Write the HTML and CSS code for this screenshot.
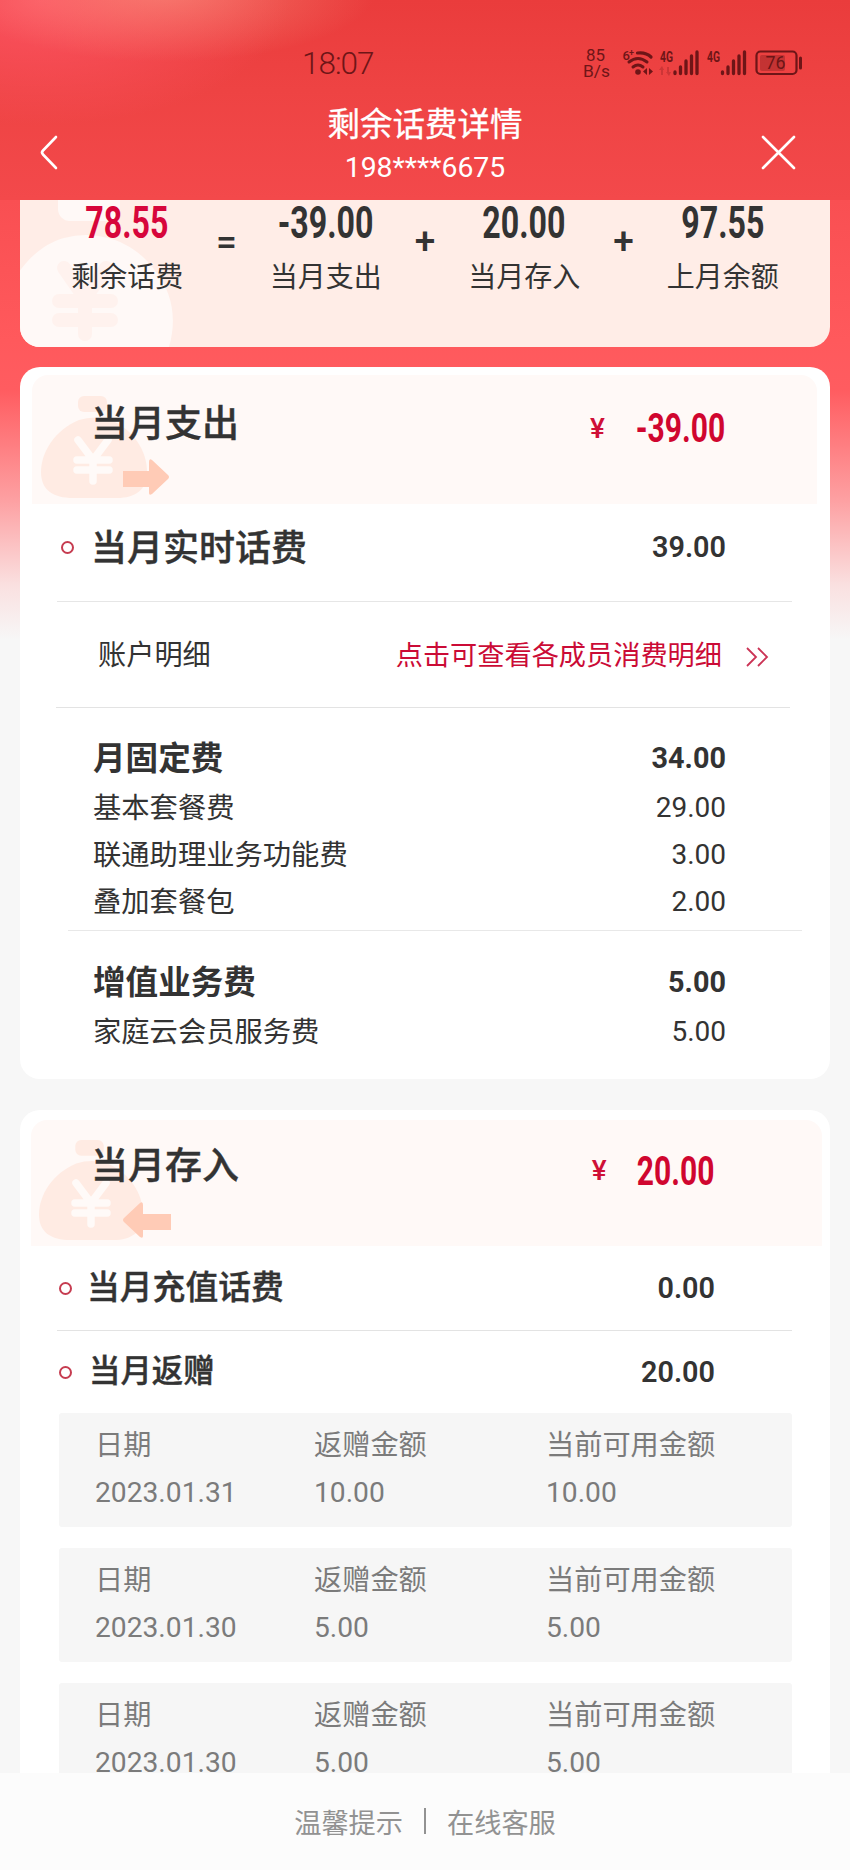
FILE: index.html
```html
<!DOCTYPE html>
<html lang="zh-CN">
<head>
<meta charset="utf-8">
<title>剩余话费详情</title>
<link rel="stylesheet" href="styles.css">
</head>
<body>
<svg class="defs" width="0" height="0">
  <symbol id="bag" viewBox="0 0 106 102">
    <rect x="37" y="0" width="29" height="16" rx="6"/>
    <path d="M38 24C14 34 0 56 0 76C0 94 12 102 32 102H76C94 102 106 94 106 76C106 54 92 34 70 24Q54 19 38 24Z"/>
  </symbol>
  <symbol id="yen" viewBox="0 0 40 50">
    <path d="M5 4L20 24L35 4M20 22V45M4 24H36M4 34H36" fill="none" stroke-linecap="round"/>
  </symbol>
</svg>
<div class="page">
  <header class="header">
    <div class="status">
      <span class="clock">18:07</span>
      <svg class="indicators" width="270" height="60" viewBox="0 0 270 60">
        <g class="status-text">
          <text x="26" y="31" font-size="17" textLength="19" lengthAdjust="spacingAndGlyphs">85</text>
          <text x="23" y="47" font-size="17" textLength="27" lengthAdjust="spacingAndGlyphs">B/s</text>
          <text x="62.500" y="30" font-size="13" font-weight="500">6<tspan dx="-1" dy="-4" font-size="9">+</tspan></text>
          <text x="100" y="31.500" font-size="15" font-weight="700" textLength="13" lengthAdjust="spacingAndGlyphs">4G</text>
          <text x="147" y="31.500" font-size="15" font-weight="700" textLength="13" lengthAdjust="spacingAndGlyphs">4G</text>
          <text x="205.500" y="39" font-size="18" textLength="20" lengthAdjust="spacingAndGlyphs">76</text>
        </g>
        <g class="status-line">
          <path d="M77.500 23Q86 22 91 27" stroke-width="3.200"/>
          <path d="M69 32Q78 25 87 32" stroke-width="3"/>
          <path d="M73 37Q78 33 83 37" stroke-width="3"/>
          <path d="M115 43.500V42M120.500 43.500V37M126 43.500V31M131.500 43.500V26M137 43.500V22" stroke-width="3.300"/>
          <path d="M162.500 43.500V42M168 43.500V37M173.500 43.500V31M179 43.500V26M184.500 43.500V22" stroke-width="3.300"/>
          <rect x="196.500" y="21.500" width="40" height="22.500" rx="4" stroke-width="2.200"/>
          <path d="M240.500 28V38" stroke-width="3"/>
        </g>
        <g class="status-fill">
          <circle cx="78" cy="42" r="2.800"/>
          <path d="M83 41.500L87 38V45ZM93 41.500L89 38V45Z"/>
          <rect x="200" y="25" width="25" height="16" rx="2" opacity=".32"/>
          <path d="M99 40L102 36L104 40H103V45H101V40ZM106 42L109 46L111 42H109V37H107V42Z" opacity=".25"/>
        </g>
      </svg>
    </div>
    <div class="titlebar">
      <svg class="nav-icon" width="36" height="36" viewBox="0 0 36 36"><path d="M19 2L6 15.500Q4 17.500 6 19.500L19 33"/></svg>
      <div class="titles">
        <h1 class="title">剩余话费详情</h1>
        <p class="phone">198****6675</p>
      </div>
      <svg class="nav-icon" width="36" height="36" viewBox="0 0 36 36"><path d="M3 2L34 33M34 2L3 33"/></svg>
    </div>
  </header>

  <main class="content">
    <section class="summary">
      <svg class="summary-bag" width="160" height="150" viewBox="0 0 160 150">
        <rect x="38" y="-14" width="62" height="35" rx="12"/>
        <path d="M44 38C22 44 4 62 -6 80V150H148C158 120 152 92 136 72C122 52 104 42 88 38Q66 32 44 38Z"/>
        <path class="summary-yen" d="M44 68L65 98L86 68M65 98V134M39 101H91M39 120H91"/>
      </svg>
      <div class="sum-item"><b class="sum-num sum-red">78.55</b><span class="sum-label">剩余话费</span></div>
      <span class="op">=</span>
      <div class="sum-item"><b class="sum-num">-39.00</b><span class="sum-label">当月支出</span></div>
      <span class="op">+</span>
      <div class="sum-item"><b class="sum-num">20.00</b><span class="sum-label">当月存入</span></div>
      <span class="op">+</span>
      <div class="sum-item"><b class="sum-num">97.55</b><span class="sum-label">上月余额</span></div>
    </section>

    <section class="card card-out">
      <div class="banner">
        <svg class="banner-art" width="140" height="108" viewBox="0 0 140 108">
          <use href="#bag" x="0" y="0" width="106" height="102"/>
          <use class="yen" href="#yen" x="32" y="40" width="40" height="50"/>
          <path class="arrow" d="M82 75H108V66Q108 62 111 64L127 79Q129 81 127 83L111 98Q108 100 108 97V91H82Z"/>
        </svg>
        <h2 class="banner-title">当月支出</h2>
        <span class="yuan">¥</span>
        <b class="banner-num">-39.00</b>
      </div>
      <div class="row row-live"><i class="dot"></i><h3 class="name name-xl">当月实时话费</h3><b class="num">39.00</b></div>
      <div class="row row-account">
        <span class="account">账户明细</span>
        <a class="link">点击可查看各成员消费明细</a>
        <svg class="chevrons" width="24" height="22" viewBox="0 0 24 22"><path d="M2 2L11 11L2 20M13 2L22 11L13 20"/></svg>
      </div>
      <div class="group group-fixed">
        <div class="row row-head"><h3 class="name name-bold">月固定费</h3><b class="num num-bold">34.00</b></div>
        <div class="row row-line"><span class="name">基本套餐费</span><span class="num">29.00</span></div>
        <div class="row row-line"><span class="name">联通助理业务功能费</span><span class="num">3.00</span></div>
        <div class="row row-line"><span class="name">叠加套餐包</span><span class="num">2.00</span></div>
      </div>
      <div class="group group-extra">
        <div class="row row-head"><h3 class="name name-bold">增值业务费</h3><b class="num num-bold">5.00</b></div>
        <div class="row row-line"><span class="name">家庭云会员服务费</span><span class="num">5.00</span></div>
      </div>
    </section>

    <section class="card card-in">
      <div class="banner">
        <svg class="banner-art" width="140" height="108" viewBox="0 0 140 108">
          <use href="#bag" x="0" y="0" width="104" height="102"/>
          <use class="yen" href="#yen" x="32" y="40" width="40" height="50"/>
          <path class="arrow" d="M132 75H104V66Q104 62 101 64L85 79Q83 81 85 83L101 98Q104 100 104 97V91H132Z"/>
        </svg>
        <h2 class="banner-title">当月存入</h2>
        <span class="yuan">¥</span>
        <b class="banner-num">20.00</b>
      </div>
      <div class="row row-recharge"><i class="dot"></i><h3 class="name name-lg">当月充值话费</h3><b class="num">0.00</b></div>
      <div class="row row-gift"><i class="dot"></i><h3 class="name name-md">当月返赠</h3><b class="num">20.00</b></div>
      <div class="gifts">
        <dl class="gift">
          <div><dt>日期</dt><dd>2023.01.31</dd></div>
          <div><dt>返赠金额</dt><dd>10.00</dd></div>
          <div><dt>当前可用金额</dt><dd>10.00</dd></div>
        </dl>
        <dl class="gift">
          <div><dt>日期</dt><dd>2023.01.30</dd></div>
          <div><dt>返赠金额</dt><dd>5.00</dd></div>
          <div><dt>当前可用金额</dt><dd>5.00</dd></div>
        </dl>
        <dl class="gift">
          <div><dt>日期</dt><dd>2023.01.30</dd></div>
          <div><dt>返赠金额</dt><dd>5.00</dd></div>
          <div><dt>当前可用金额</dt><dd>5.00</dd></div>
        </dl>
      </div>
    </section>
  </main>

  <footer class="footer"><span>温馨提示</span><i class="bar"></i><span>在线客服</span></footer>
</div>
</body>
</html>
```
FILE: styles.css
```css
* { box-sizing: border-box; margin: 0; padding: 0; }
body {
  width: 850px;
  background: #f7f7f7;
  color: #333;
  font-family: Roboto, "Noto Sans CJK SC", sans-serif;
}
i { font-style: normal; }
.defs { display: block; }
.page {
  width: 850px;
  height: 1870px;
  overflow: hidden;
  display: flex;
  flex-direction: column;
  background: linear-gradient(#f34a4d 0, #f94f52 200px, #ff595c 340px, #ff5c60 390px, #fda0a2 500px, #fae0e0 585px, #f7f7f7 640px);
}

/* header */
.header {
  flex: none;
  height: 200px;
  background:
    radial-gradient(ellipse 210px 70px at 165px -8px, rgba(250, 150, 130, .6), rgba(250, 140, 125, 0)),
    radial-gradient(ellipse 250px 125px at 40px 0, rgba(255, 88, 104, .85), rgba(255, 80, 98, 0)),
    linear-gradient(#ea3c3c, #ee4343 90px, #f3494b 200px);
}
.status { height: 90px; display: flex; padding-top: 30px; }
.clock {
  width: 258px;
  margin-left: 302px;
  font-size: 31.500px;
  line-height: 67px;
  font-weight: 300;
  color: #6e1517;
  letter-spacing: -1px;
}
.indicators { color: #6e1517; }
.status-text, .status-fill { fill: #6e1517; }
.status-line { fill: none; stroke: #6e1517; stroke-linecap: round; }
.titlebar { display: flex; justify-content: space-between; padding: 15px 54px 0 37px; }
.nav-icon { margin-top: 30px; fill: none; stroke: #fff; stroke-width: 2.600; stroke-linecap: round; }
.titles { width: 300px; margin-left: 17px; text-align: center; color: #fff; }
.title { font-size: 32.500px; line-height: 40px; font-weight: 400; -webkit-text-stroke: .3px #fff; }
.phone { font-size: 28.400px; line-height: 46px; }

.content { flex: none; height: 1573px; overflow: hidden; padding: 0 20px; }

/* balance equation */
.summary {
  position: relative;
  height: 147px;
  overflow: hidden;
  display: flex;
  justify-content: center;
  background: #ffede7;
  border-radius: 0 0 20px 20px;
}
.summary-bag { position: absolute; left: 0; top: 0; fill: #fff9f7; }
.summary-yen { fill: none; stroke: #fff2ee; stroke-width: 14; stroke-linecap: round; }
.sum-item { position: relative; width: 138px; flex: none; display: flex; flex-direction: column; align-items: center; }
.sum-num { font-size: 44px; line-height: 44px; padding-top: 1px; transform: scaleX(.73); white-space: nowrap; }
.sum-red { color: #d7063b; }
.sum-label { font-size: 28px; line-height: 40px; margin-top: 12.500px; white-space: nowrap; }
.op { width: 60.500px; flex: none; text-align: center; font-size: 37px; font-weight: 500; line-height: 83px; }

/* cards */
.card { background: #fff; border-radius: 20px; }
.card-out { margin-top: 20px; height: 712px; padding-top: 8px; }
.card-in { margin-top: 31px; height: 740px; padding-top: 10px; }
.banner { position: relative; display: flex; align-items: center; border-radius: 16px 16px 0 0; background: #fff9f7; }
.banner > :not(.banner-art) { position: relative; }
.card-out .banner { height: 129px; margin: 0 13px 0 12px; padding: 0 92px 30px 59px; }
.card-in .banner { height: 126px; margin: 0 8px 0 11px; padding: 0 108px 32px 60px; }
.banner-art { position: absolute; left: 9px; top: 21px; fill: #ffebe3; }
.card-in .banner-art { left: 8px; top: 19px; }
.yen { stroke: #fffaf8; stroke-width: 7.500; }
.arrow { fill: #ffcbb6; }
.banner-title { font-size: 37px; line-height: 44px; font-weight: 500; -webkit-text-stroke: .4px #333; }
.yuan { margin-left: auto; margin-right: 21px; padding-top: 8px; font-size: 28px; font-weight: 500; line-height: 40px; color: #cf1037; }
.card-in .yuan { margin-right: 24px; }
.banner-num { font-size: 40px; line-height: 44px; margin-top: 9px; color: #d0062f; transform: scaleX(.75); transform-origin: right; margin-left: -20px; }

.row { display: flex; align-items: center; }
.name { font-size: 28.300px; line-height: 40px; font-weight: 400; white-space: nowrap; padding-top: 2px; }
.name-xl { font-size: 36px; font-weight: 500; padding-top: 4px; -webkit-text-stroke: .4px #333; }
.name-lg { font-size: 32.800px; font-weight: 500; padding-top: 0; -webkit-text-stroke: .4px #333; }
.name-md { font-size: 31.400px; font-weight: 500; padding-top: 0; -webkit-text-stroke: .4px #333; }
.name-bold { font-size: 32.600px; font-weight: 700; }
.num { margin-left: auto; font-size: 28px; line-height: 40px; }
b.num { font-size: 28.800px; font-weight: 600; }
b.num-bold { font-weight: 700; }
.dot { flex: none; width: 13px; height: 13px; border: 2px solid #c63c50; border-radius: 50%; }

.row-live { height: 98px; margin: 0 38px 0 37px; padding: 0 66px 12px 4px; border-bottom: 1px solid #e6e6e6; }
.row-live .dot { margin: 2px 17px 0 0; }
.row-account { height: 106px; margin: 0 40px 0 36px; padding: 0 21px 0 42px; border-bottom: 1px solid #e3e3e3; }
.account { font-size: 28.200px; line-height: 40px; padding-top: 2px; }
.link { margin-left: auto; padding-top: 2px; font-size: 27.200px; line-height: 40px; color: #cb0b36; }
.chevrons { margin: 5px 0 0 23px; fill: none; stroke: #cb3355; stroke-width: 1.800; }
.group { padding: 0 104px 0 73px; }
.group-fixed { height: 223px; padding-top: 24px; position: relative; }
.group-fixed::after { content: ""; position: absolute; left: 48px; right: 28px; bottom: 0; height: 1px; background: #e8e8e8; }
.group-extra { padding-top: 25px; }
.row-head { height: 52px; }
.row-line { height: 47px; }
.group-extra .row-line { height: 48px; }

.row-recharge { height: 85px; margin: 0 38px 0 37px; padding: 0 77px 1px 2px; border-bottom: 1px solid #e3e3e3; }
.row-gift { height: 82px; margin: 0 38px 0 37px; padding: 0 77px 1px 2px; }
.row-recharge .dot { margin: 2px 15px 0 0; }
.row-gift .dot { margin: 1px 17px 0 0; }
.gifts { display: flex; flex-direction: column; gap: 21px; margin: 0 38px 0 39px; }
.gift {
  flex: none;
  height: 114px;
  display: grid;
  grid-template-columns: 219px 232px 1fr;
  padding: 12px 0 0 36px;
  background: #f6f6f6;
  border-radius: 3px;
  color: #7b7b7b;
  font-size: 28.200px;
}
dt { line-height: 42px; white-space: nowrap; }
dd { line-height: 52px; }

.footer {
  flex: none;
  height: 97px;
  display: flex;
  justify-content: center;
  align-items: center;
  gap: 21px;
  background: #fcfcfc;
  color: #929292;
  font-size: 27.200px;
  padding-bottom: 2px;
}
.bar { width: 2px; height: 26px; background: #929292; }
```
